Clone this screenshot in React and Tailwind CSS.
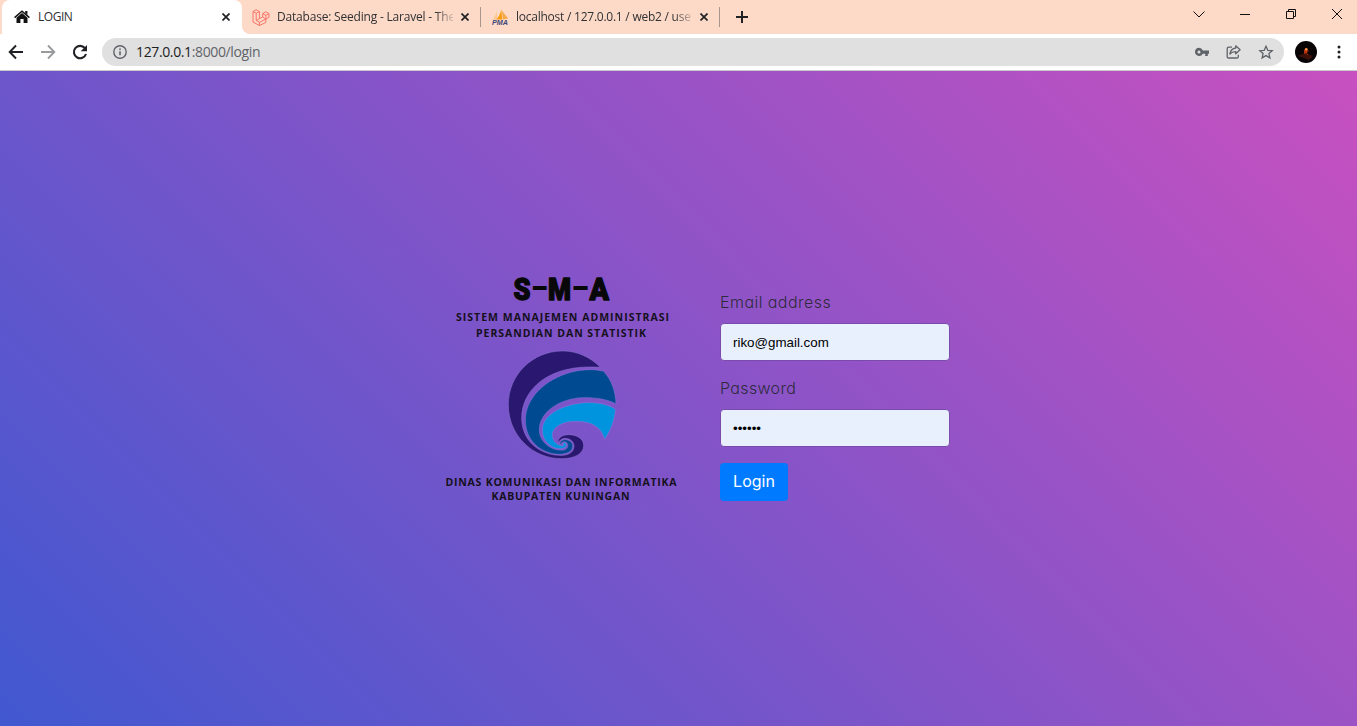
import React from "react";

const uiFont = "font-['Open_Sans','Noto_Sans',sans-serif]";

function CloseGlyph({ className }) {
  return (
    <svg viewBox="0 0 8 8" className={`h-2 w-2 shrink-0 ${className}`} fill="none" stroke="#202124" strokeWidth="1.7">
      <path d="M.5.5l7 7M7.5.5l-7 7" />
    </svg>
  );
}

function HomeIcon() {
  return (
    <svg viewBox="0 0 16 14" className="h-3.5 w-4 shrink-0">
      <path d="M8 2.9L13.5 7.7V13H9.6V9H6.4v4H2.5V7.7z" fill="#111" />
      <path d="M.6 7.6L8 1.2l7.4 6.4" fill="none" stroke="#111" strokeWidth="1.5" />
      <path d="M11.2 1h2.2v4l-2.2-2z" fill="#111" />
    </svg>
  );
}

function LaravelIcon() {
  return (
    <svg viewBox="0 0 18 17" className="h-[17px] w-[18px] shrink-0" fill="none" stroke="#f9695f" strokeWidth="0.9" strokeLinejoin="round">
      <path d="M1 2.5L4.2.8l3.2 1.8v7.1l3.3-1.8V4.6L13.9 2.8 17 4.6v3.6l-3.2 1.9v3.4l-6.4 3L1 13z" />
      <path d="M1 2.5l3.2 1.8 3.2-1.7M4.2 4.3v7.2l3.2 1.8v3.2M4.2 11.5l3.2-1.8M7.4 13.3l6.4-3.2-3.1-2.2M10.7 4.6l3.2 1.8L17 4.6M13.9 6.4v3.7" />
    </svg>
  );
}

function SailIcon() {
  return (
    <svg viewBox="0 0 17 16" className="h-4 w-[17px] shrink-0">
      <path d="M.8 10.500C3 7.500 4.300 5 5 1.500v9z" fill="#f9c88f" />
      <path d="M4.300 10.500c2.500-3 4.500-6.500 5-10.500l.9 10.500z" fill="#f89c0e" />
      <path d="M10.700 10.500L10 1.500c2 3 4.200 5.500 6.200 8z" fill="#f6a94a" />
      <text x="0" y="16" textLength="16" lengthAdjust="spacingAndGlyphs" className="font-['Liberation_Sans',sans-serif] text-[6.500px] font-bold italic" fill="#3f4778">PMA</text>
    </svg>
  );
}

function Tab({ icon, title, titleClass, className }) {
  return (
    <div className={`flex h-full items-center ${className}`}>
      {icon}
      <span className={`overflow-hidden text-xs leading-4 whitespace-nowrap text-[#303134] ${titleClass}`}>{title}</span>
      <CloseGlyph className="ml-2" />
    </div>
  );
}

function TabStrip() {
  return (
    <div className="flex h-[34px] bg-white">
      <div className="w-[10px] bg-[#fddac7]"><div className="ml-[2px] h-full w-4 rounded-tl-lg bg-white" /></div>
      <div className="flex w-[232px] bg-[#fddac7]">
        <div className="flex w-full items-center rounded-tr-lg bg-white pl-1">
          <HomeIcon />
          <span className="ml-2 w-[176px] text-xs leading-4 tracking-[-0.45px] text-[#303134]">LOGIN</span>
          <CloseGlyph className="ml-2" />
        </div>
      </div>
      <div className="flex flex-1 rounded-bl-lg bg-[#fddac7]">
        <Tab
          icon={<LaravelIcon />}
          title="Database: Seeding - Laravel - The"
          titleClass="ml-[7px] w-[176px] tracking-[-0.2px] [mask-image:linear-gradient(to_right,black_90%,transparent_102%)]"
          className="w-[238px] pl-[10px]"
        />
        <div className="mt-[7px] h-5 w-px bg-[#a9948b]" />
        <Tab
          icon={<SailIcon />}
          title="localhost / 127.0.0.1 / web2 / use"
          titleClass="ml-[7px] w-[176px] tracking-[-0.24px] [mask-image:linear-gradient(to_right,black_90%,transparent_102%)]"
          className="w-[238px] pl-[11px]"
        />
        <div className="mt-[7px] h-5 w-px bg-[#a9948b]" />
        <svg viewBox="0 0 12 12" className="mt-[11px] ml-4 h-3 w-3" stroke="#202124" strokeWidth="2">
          <path d="M6 0v12M0 6h12" />
        </svg>
        <svg viewBox="0 0 160 20" className="mt-1 mr-[10px] ml-auto h-5 w-40" fill="none" stroke="#111" strokeWidth="1">
          <path d="M6.500 7.500l5.500 5.500 5.500-5.500" />
          <path d="M53 10.500h10" />
          <path d="M99.500 7.500h7v7h-7zM101.500 7.500v-2h7v7h-2" />
          <path d="M145 5l10 10M155 5l-10 10" />
        </svg>
      </div>
    </div>
  );
}

function Toolbar() {
  return (
    <div className="flex h-[37px] items-center border-b border-[#c9c9cb] bg-white">
      <svg viewBox="0 0 102 36" className="h-9 w-[102px] shrink-0" fill="none" strokeWidth="1.900">
        <path d="M23 18H10M16 11.500L9.700 18l6.300 6.500" stroke="#202124" />
        <path d="M41 18h13M48 11.500l6.300 6.500-6.300 6.500" stroke="#9a9b9d" />
        <path d="M84.800 14A6.200 6.200 0 1 0 86 20" stroke="#202124" strokeWidth="2.100" />
        <path d="M87 11v6.300h-6.300z" fill="#202124" />
      </svg>
      <div className="flex h-7 w-[1182px] items-center rounded-full bg-[#e0e0e0] pr-[10px] pl-[11px]">
        <svg viewBox="0 0 14 14" className="h-3.5 w-3.5" fill="none" stroke="#5f6368" strokeWidth="1.400">
          <circle cx="7" cy="7" r="6.200" />
          <path d="M7 6.200v4M7 3.600v1.500" strokeWidth="1.600" />
        </svg>
        <span className="ml-[9px] text-sm leading-5 tracking-[-0.37px] text-[#5f6368]">
          <span className="text-[#202124]">127.0.0.1</span>:8000/login
        </span>
        <svg viewBox="0 0 80 18" className="ml-auto h-[18px] w-20" fill="none" stroke="#5f6368" strokeWidth="1.300">
          <path fillRule="evenodd" d="M5 4.800a4 4 0 0 1 3.800 2.700H15v3.200h-1.200v2.400h-2.600v-2.400H8.800A4.100 4.100 0 1 1 5 4.800zM5 7.500a1.500 1.500 0 1 0 0 3 1.500 1.500 0 0 0 0-3z" fill="#5f6368" stroke="none" />
          <path d="M38 4.200h-3.500c-.8 0-1.300.5-1.300 1.300v8.300c0 .7.500 1.200 1.300 1.200h8.500c.8 0 1.300-.5 1.300-1.200v-2" />
          <path d="M41.700 2.800l4.400 4-4.400 4V8.600c-2.500-.1-4.300.7-5.800 2.500.500-3.600 2.500-5.700 5.800-6.100z" strokeLinejoin="round" />
          <path d="M72 3.300l1.800 4 4.400.4-3.300 2.900 1 4.300L72 12.600l-3.900 2.300 1-4.300-3.300-2.900 4.400-.4z" />
        </svg>
      </div>
      <svg viewBox="0 0 22 22" className="ml-[11px] h-[22px] w-[22px]">
        <circle cx="11" cy="11" r="11" fill="#080405" />
        <path d="M3 15c3-2 5-1 7-4l3 2 5 2-4 4-5-2z" fill="#3b1009" />
        <path d="M9 9l2-2 1 2 2 1-2 1 1 4-2-3-2 1z" fill="#b8330e" />
        <circle cx="11.300" cy="8.300" r="1.300" fill="#ff9447" />
      </svg>
      <svg viewBox="0 0 4 14" className="ml-5 h-3.5 w-1" fill="#202124">
        <circle cx="2" cy="2" r="1.500" />
        <circle cx="2" cy="7" r="1.500" />
        <circle cx="2" cy="12" r="1.500" />
      </svg>
    </div>
  );
}

function Logo() {
  return (
    <svg viewBox="440 265 245 245" className="h-[245px] w-[245px] shrink-0">
      <g fill="#080808" stroke="#080808" strokeWidth="1.400" strokeLinejoin="round" className="font-['Roboto',sans-serif] text-[32px] font-black">
        <text x="513.500" y="300" textLength="17" lengthAdjust="spacingAndGlyphs">S</text>
        <text x="531" y="299" textLength="16.500" lengthAdjust="spacingAndGlyphs" strokeWidth="0">–</text>
        <text x="548" y="300" textLength="23" lengthAdjust="spacingAndGlyphs">M</text>
        <text x="571.500" y="299" textLength="17" lengthAdjust="spacingAndGlyphs" strokeWidth="0">–</text>
        <text x="589.500" y="300" textLength="19.500" lengthAdjust="spacingAndGlyphs">A</text>
      </g>
      <g fill="#15101c" className="font-['Open_Sans',sans-serif] text-[10.500px] font-bold">
        <text x="456" y="321" textLength="213">SISTEM MANAJEMEN ADMINISTRASI</text>
        <text x="476" y="337" textLength="170">PERSANDIAN DAN STATISTIK</text>
        <text x="445.500" y="486" textLength="231">DINAS KOMUNIKASI DAN INFORMATIKA</text>
        <text x="491.500" y="499.500" textLength="138">KABUPATEN KUNINGAN</text>
      </g>
      <g transform="translate(495 340) scale(.33333)" stroke="#9078d5" strokeWidth="1.500">
        <path fill="#2a176f" d="M316 82C285 50 245 33 203 33C112 33 40 105 40 194C40 285 112 356 200 356C240 356 266 340 266 317C266 296 246 284 222 284C202 284 187 294 189 310C192 303 200 294 212 295C228 296 238 307 237 321C235 340 215 348 190 346C130 342 80 300 80 234C80 150 160 70 316 82Z" />
        <path fill="#004a91" d="M326 94C300 86 262 88 230 96C150 117 91 175 91 240C91 300 135 340 190 343C215 343 233 335 233 318C233 306 222 299 210 299C200 299 193 306 195 315C199 306 209 302 215 308C222 315 218 327 207 330C170 335 133 305 133 270C133 215 195 176 262 173C300 172 340 178 363 192C362 155 350 120 326 94Z" />
        <path fill="#0094df" d="M361 208C340 192 305 187 275 188C200 192 142 225 142 270C142 305 170 326 195 326C212 326 218 316 212 309C207 306 201 311 207 316C195 322 172 308 172 285C172 262 200 244 245 244C290 244 320 262 329 298C345 275 360 240 361 208Z" />
      </g>
    </svg>
  );
}

const labelFont = "font-['Inter',sans-serif] [font-feature-settings:'cv11']";
const field =
  "h-[38px] w-[230px] rounded border border-[#7b4bab] bg-[#e8f0fe] px-3 font-['Liberation_Sans',Arial,sans-serif] text-[13.333px] text-black outline-none";

function LoginForm() {
  return (
    <form className="mt-[25px] ml-[35px] flex flex-col items-start" onSubmit={(e) => e.preventDefault()}>
      <label htmlFor="email" className={`${labelFont} mb-[9px] text-base leading-6 font-[350] tracking-[0.45px] text-[#212529]/90`}>
        Email address
      </label>
      <input id="email" type="text" defaultValue="riko@gmail.com" className={field} />
      <label htmlFor="password" className={`${labelFont} mt-[15px] mb-[9px] text-base leading-6 font-[350] tracking-[0.35px] text-[#212529]/90`}>
        Password
      </label>
      <input id="password" type="password" defaultValue="secret" className={field} />
      <button className={`${labelFont} mt-4 h-[38px] w-[68px] rounded bg-[#007bff] pb-0.5 text-base leading-6 text-white`}>Login</button>
    </form>
  );
}

export default function App() {
  return (
    <div className={`flex h-[726px] w-[1357px] flex-col overflow-hidden ${uiFont}`}>
      <TabStrip />
      <Toolbar />
      <main className="flex flex-1 items-start bg-[linear-gradient(45deg,#4158d0,#c850c0)] pt-[194px] pl-[440px]">
        <Logo />
        <LoginForm />
      </main>
    </div>
  );
}
